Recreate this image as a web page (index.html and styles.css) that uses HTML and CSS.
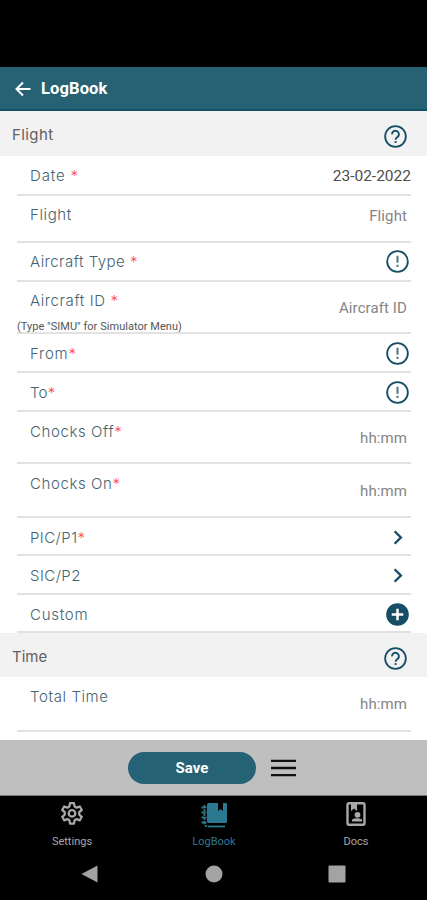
FILE: index.html
```html
<!DOCTYPE html>
<html lang="en">
<head>
<meta charset="utf-8">
<title>LogBook</title>
<link rel="stylesheet" href="styles.css">
</head>
<body>
<svg width="0" height="0" class="defs">
  <symbol id="help" viewBox="0 0 24 24"><circle cx="12" cy="12" r="10.800" fill="none" stroke="currentColor" stroke-width="1.9"/><path d="M8.400 9.800a3.600 3.600 0 1 1 5.800 2.600c-1.300 1-2.100 1.500-2.100 2.900" fill="none" stroke="currentColor" stroke-width="2"/><path d="M11.100 16.800h2v2h-2z" fill="currentColor"/></symbol>
  <symbol id="alert" viewBox="0 0 24 24"><circle cx="12" cy="12" r="10.800" fill="none" stroke="currentColor" stroke-width="1.9"/><path d="M10.900 6h2.200v7.200h-2.200zM10.900 15.500h2.200v2.200h-2.200z" fill="#5b7783"/></symbol>
  <symbol id="chevron" viewBox="0 0 24 24"><path d="M9 5.500l6.500 6.500-6.500 6.500" fill="none" stroke="currentColor" stroke-width="2.500"/></symbol>
</svg>
<div class="status"></div>
<header class="bar">
  <svg class="back" viewBox="0 0 16 16"><path d="M15.500 8H2M8 1.500L1.500 8 8 14.500" fill="none" stroke="currentColor" stroke-width="2"/></svg>
  <h1>LogBook</h1>
</header>
<main class="form">
  <div class="section flight-head"><span>Flight</span><svg class="ico"><use href="#help"/></svg></div>
  <div class="row"><label class="l-date">Date <i>*</i></label><span class="value filled">23-02-2022</span></div>
  <div class="row flight"><label>Flight</label><span class="value">Flight</span></div>
  <div class="row"><label class="l-type">Aircraft Type <i>*</i></label><svg class="ico"><use href="#alert"/></svg></div>
  <div class="row tall"><div class="stack"><label>Aircraft ID <i>*</i></label><small>(Type "SIMU" for Simulator Menu)</small></div><span class="value">Aircraft ID</span></div>
  <div class="row"><label class="l-from">From<i>*</i></label><svg class="ico"><use href="#alert"/></svg></div>
  <div class="row"><label class="l-to">To<i>*</i></label><svg class="ico"><use href="#alert"/></svg></div>
  <div class="row tall"><label>Chocks Off<i>*</i></label><span class="value">hh:mm</span></div>
  <div class="row taller"><label>Chocks On<i>*</i></label><span class="value">hh:mm</span></div>
  <div class="row short"><label class="l-pic">PIC/P1<i>*</i></label><svg class="ico"><use href="#chevron"/></svg></div>
  <div class="row"><label class="l-pic">SIC/P2</label><svg class="ico"><use href="#chevron"/></svg></div>
  <div class="row short"><label class="l-custom">Custom</label><svg class="ico" viewBox="0 0 24 24"><circle cx="12" cy="12" r="11.800" fill="currentColor"/><path d="M12 6v12M6 12h12" stroke="#fff" stroke-width="2.600"/></svg></div>
  <div class="section"><span>Time</span><svg class="ico"><use href="#help"/></svg></div>
  <div class="row total"><label>Total Time</label><span class="value">hh:mm</span></div>
</main>
<div class="actions">
  <button>Save</button>
  <svg class="menu" viewBox="0 0 25 18"><path d="M0 1.800h25M0 9h25M0 16.200h25" stroke="#111" stroke-width="2.300"/></svg>
</div>
<nav class="tabs">
  <a><svg viewBox="0 0 24 24" fill="none" stroke="currentColor" stroke-width="2.300" stroke-linejoin="round"><path d="M10 1.200h4l.6 3.400 2 1.100 3.200-1.200 2 3.500-2.600 2.200v2.400l2.600 2.200-2 3.500-3.200-1.200-2 1.100-.6 3.400h-4l-.6-3.400-2-1.100-3.200 1.200-2-3.500 2.600-2.200V10.200L2.200 8l2-3.500 3.200 1.200 2-1.100z"/><circle cx="12" cy="11.400" r="3.300"/></svg><span>Settings</span></a>
  <a class="active"><svg class="book" viewBox="0 0 28 26"><path d="M9 1h9v8l2.500-2 2.500 2V1h3q1 0 1 1v18q0 1-1 1H9q-2 0-2-2V3q0-2 2-2z" fill="currentColor"/><path d="M4.500 3v18q0 3.500 3.500 3.500M1.500 5.500h5M1.500 10.500h5M1.500 15.500h5M1.500 20.500h5" fill="none" stroke="currentColor" stroke-width="1.800" stroke-dasharray="3 1"/><path d="M8 24.500h17" stroke="currentColor" stroke-width="1.800"/></svg><span>LogBook</span></a>
  <a><svg viewBox="0 0 24 24"><rect x="3.500" y="1.200" width="17" height="21.600" rx="1.500" fill="none" stroke="currentColor" stroke-width="2.400"/><path d="M7 2h6v7l-3-2.500L7 9zM8 17.500q5-2.500 10 0v2H8z" fill="currentColor"/><circle cx="13.500" cy="12.800" r="2.900" fill="currentColor"/></svg><span>Docs</span></a>
</nav>
<div class="system">
  <svg viewBox="0 0 18 18"><path d="M16.500 .5v17L.5 9z"/></svg>
  <svg viewBox="0 0 18 18"><circle cx="9" cy="9" r="8.500"/></svg>
  <svg viewBox="0 0 18 18"><rect x=".5" y=".5" width="17" height="17" rx="1"/></svg>
</div>
</body>
</html>
```
FILE: styles.css
```css
* { box-sizing: border-box; }
body { margin: 0; height: 900px; overflow: hidden; background: #000; font-family: Roboto, "Liberation Sans", sans-serif; display: flex; flex-direction: column; }
.defs { display: none; }
.status { height: 67px; flex: none; }
.bar { height: 44px; flex: none; background: #266274; border-bottom: 2px solid #165063; color: #fff; display: flex; align-items: center; padding: 1px 15px 0; gap: 10px; }
.back { width: 16px; height: 16px; }
h1 { margin: 0; font-size: 16.5px; font-weight: 700; line-height: 20px; letter-spacing: .12px; }
.form { height: 629px; flex: none; background: #fff; overflow: hidden; }
.section { height: 45px; background: #f2f2f2; display: flex; justify-content: space-between; padding: 0 20px 0 12px; color: #606060; font: 400 15px/47px Inter, sans-serif; }
.flight-head { letter-spacing: .4px; }
.section:not(.flight-head) { height: 44px; }
.section + .row { height: 40px; }
.ico { width: 23px; height: 23px; color: #164e65; flex: none; }
.section .ico { margin-top: 14px; }
.row { height: 39px; margin: 0 16px 0 17px; padding-left: 13px; border-bottom: 2px solid #e2e2e2; display: flex; justify-content: space-between; align-items: flex-start; }
.row .ico { margin: 7px 2px 0 0; }
.row label { font: 300 15px/38px Inter, sans-serif; letter-spacing: .6px; color: #45636f; white-space: pre; }
.tall ~ .row label { line-height: 40px; }
.tall ~ .row .ico { margin-top: 8px; }
.row .l-date { letter-spacing: .85px; line-height: 40px; }
.row .l-type { letter-spacing: .48px; }
.row .l-from { letter-spacing: .75px; }
.row .l-custom { letter-spacing: .75px; }
.row .l-to { letter-spacing: .2px; }
.row .l-pic { letter-spacing: .45px; }
.row i { font-style: normal; color: #ff4a4a; }
.short { height: 38px; }
.row.flight { height: 47px; }
.tall { height: 52px; }
.taller { height: 54px; }
.section + .total { height: 55px; }
.value { align-self: center; padding: 1px 4px 0 0; font-size: 15px; line-height: 20px; letter-spacing: .1px; color: #858585; }
.filled { padding: 2px 0 0; color: #4d4d4d; font-size: 15.5px; letter-spacing: 0; }
.flight .value { align-self: flex-start; margin-top: 10px; padding-top: 0; }
.stack { display: flex; flex-direction: column; }
.stack small { font-size: 11px; line-height: 12px; margin: 1px 0 0 -13px; color: #555; white-space: nowrap; letter-spacing: .04px; }
.actions { height: 56px; flex: none; background: #bfbfbf; border-bottom: 1px solid #777; display: flex; align-items: center; padding-left: 128px; gap: 15px; }
button { width: 128px; height: 32px; border: 0; border-radius: 16px; background: #266275; color: #fff; font: 700 15px/32px Roboto, sans-serif; padding: 0; }
.menu { width: 25px; height: 18px; }
.tabs { height: 56px; flex: none; display: grid; grid-template-columns: repeat(3, 1fr); color: #a8a8a8; padding-left: 1px; }
.tabs a { display: flex; flex-direction: column; align-items: center; padding-top: 6px; font-size: 11px; line-height: 14px; gap: 9px; }
.tabs svg { width: 24px; height: 24px; }
.tabs .book { width: 28px; height: 26px; margin-bottom: -2px; }
.tabs .active { color: #2b7990; }
.system { height: 48px; display: flex; justify-content: space-between; padding: 13px 81px 0; fill: #a3a3a3; }
.system svg { width: 18px; height: 18px; }
```
